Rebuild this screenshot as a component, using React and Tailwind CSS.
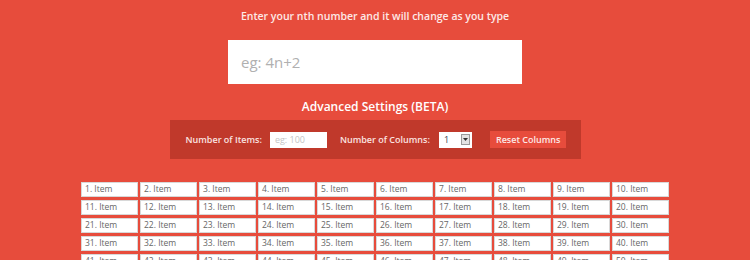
import { useState } from "react";

export default function App() {
  const [nth, setNth] = useState("");
  const items = Array.from({ length: 50 }, (_, i) => i + 1);

  return (
    <div
      className="min-h-screen bg-[#e74c3c] flex flex-col items-center overflow-hidden"
      style={{ fontFamily: '"Open Sans", "DejaVu Sans", sans-serif' }}
    >
      <h1 className="mt-[9px] text-[10.5px] leading-[14px] text-[#fde9e7] font-semibold">
        Enter your nth number and it will change as you type
      </h1>
      <input
        value={nth}
        onChange={(e) => setNth(e.target.value)}
        placeholder="eg: 4n+2"
        className="mt-[17px] w-[294px] h-[44px] bg-white px-[13px] text-[15px] text-gray-600 placeholder:text-[#b0b0b0] outline-none"
      />
      <h2 className="mt-[15px] text-[12px] leading-[16px] text-white font-semibold">
        Advanced Settings (BETA)
      </h2>
      <div className="mt-[5px] w-[411px] h-[39px] bg-[#c0392b] flex items-center px-[16px] text-[9px] text-[#fbe3e0] font-semibold whitespace-nowrap">
        <span className="shrink-0">Number of Items:</span>
        <input
          placeholder="eg: 100"
          className="ml-[8px] shrink-0 w-[57px] h-[16px] bg-white px-[5px] text-[9px] font-normal text-gray-600 placeholder:text-[#c4c4c4] outline-none"
        />
        <span className="ml-[13px] shrink-0">Number of Columns:</span>
        <div className="ml-[9px] shrink-0 w-[33px] h-[16px] bg-white flex items-center justify-between pl-[5px] pr-[2px] text-[9px] font-normal text-gray-700">
          <span>1</span>
          <span className="w-[9px] h-[11px] bg-[#e3e3e3] border border-[#9a9a9a] flex items-center justify-center">
            <svg width="5" height="3" viewBox="0 0 5 3">
              <path d="M0 0h5L2.5 3z" fill="#333" />
            </svg>
          </span>
        </div>
        <button className="ml-[18px] shrink-0 h-[17px] px-[6px] bg-[#e74c3c] text-[9px] text-[#fde9e7] font-semibold whitespace-nowrap">
          Reset Columns
        </button>
      </div>
      <div className="mt-[23px] grid grid-cols-[repeat(10,57px)] gap-x-[2px] gap-y-[3px]">
        {items.map((n) => (
          <div
            key={n}
            className="h-[15px] bg-white border border-[#d8d8d8] flex items-center pl-[3px] text-[8.5px] text-[#666]"
          >
            {n}. Item
          </div>
        ))}
      </div>
    </div>
  );
}
